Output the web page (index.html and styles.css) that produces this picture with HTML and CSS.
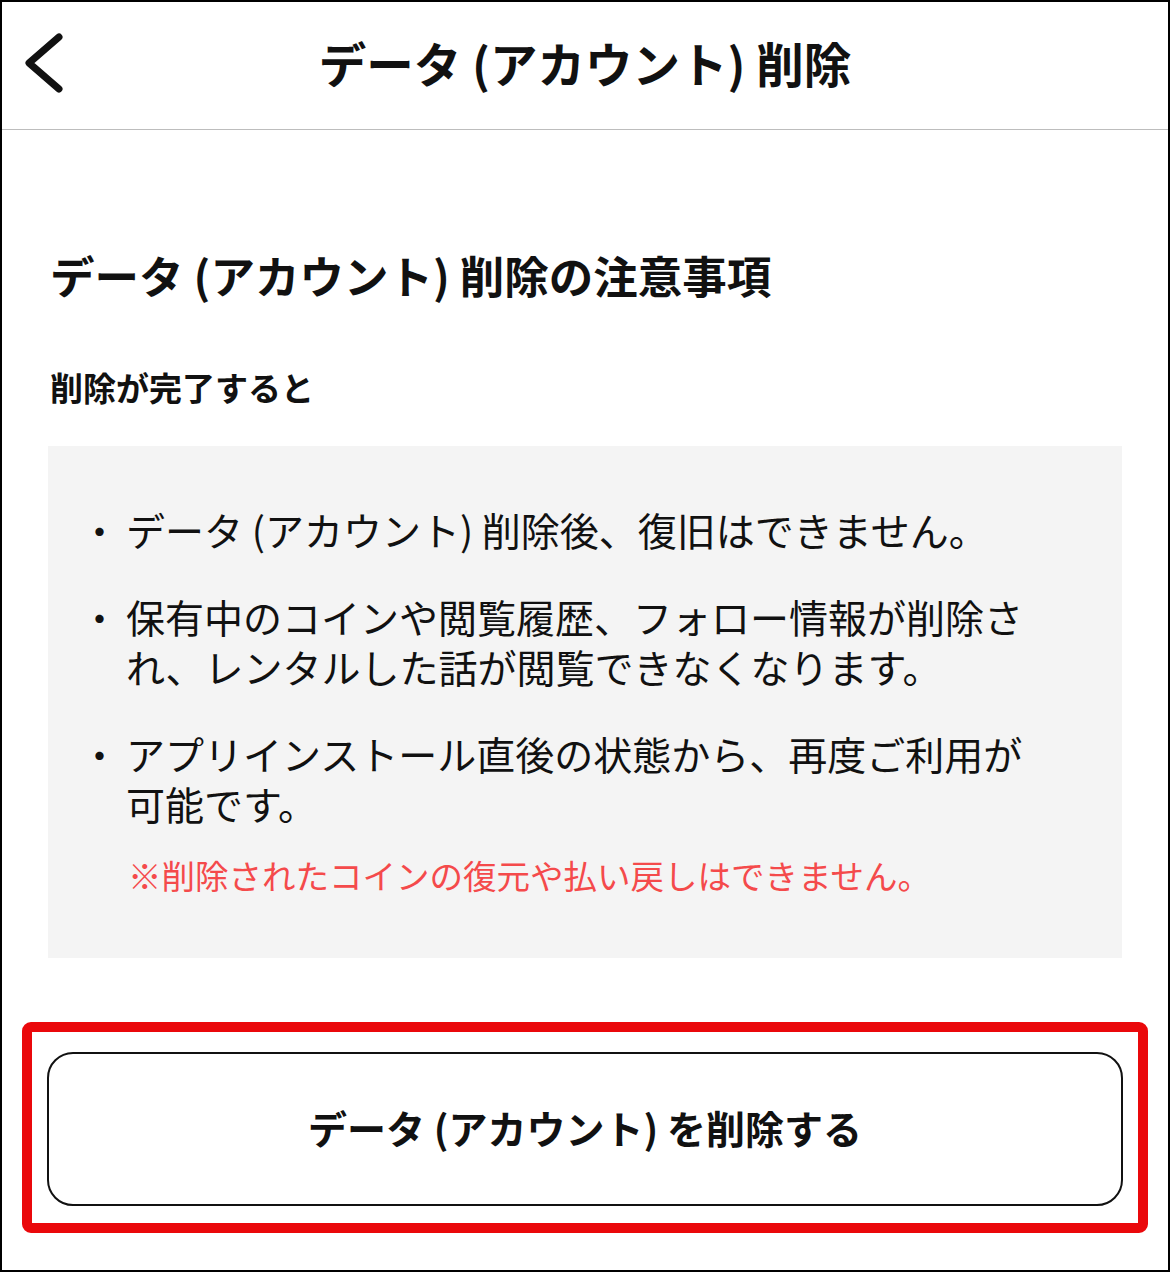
FILE: index.html
```html
<!DOCTYPE html>
<html lang="ja">
<head>
  <meta charset="UTF-8">
  <title>データ (アカウント) 削除</title>
  <link rel="stylesheet" href="styles.css">
</head>
<body>
  <div class="screen">
    <header class="nav">
      <a class="nav-back" href="#" aria-label="戻る">
        <svg width="44" height="64" viewBox="0 0 44 64">
          <polyline points="37,6 7,32 37,58" fill="none" stroke="#111" stroke-width="7" stroke-linecap="round" stroke-linejoin="round"/>
        </svg>
      </a>
      <h1 class="nav-title">データ (アカウント) 削除</h1>
      <span></span>
    </header>

    <main class="content">
      <h2 class="title">データ (アカウント) 削除の注意事項</h2>
      <h3 class="subtitle">削除が完了すると</h3>

      <div class="notice">
        <ul class="notice-list">
          <li>データ (アカウント) 削除後、復旧はできません。</li>
          <li>保有中のコインや閲覧履歴、フォロー情報が削除され、レンタルした話が閲覧できなくなります。</li>
          <li>アプリインストール直後の状態から、再度ご利用が可能です。</li>
        </ul>
        <p class="notice-warn">※削除されたコインの復元や払い戻しはできません。</p>
      </div>

      <div class="highlight">
        <button class="btn-delete">データ (アカウント) を削除する</button>
      </div>
    </main>
  </div>
</body>
</html>
```

FILE: styles.css
```css
:root {
  --texto: #111;
  --gris-caja: #f4f4f4;
  --rojo-nota: #f44a4b;
  --rojo-marco: #ea080b;
}
* {
  box-sizing: border-box;
}
body {
  margin: 0;
  font-family: "Noto Sans CJK JP", "Noto Sans", sans-serif;
  color: var(--texto);
  background: #fff;
}
.screen {
  width: 1170px;
  height: 1272px;
  border: 2px solid #000;
  overflow: hidden;
}

/* cabecera */
.nav {
  display: grid;
  grid-template-columns: 1fr auto 1fr;
  align-items: center;
  height: 128px;
  padding-bottom: 6px;
  border-bottom: 1px solid #bdbdbd;
}
.nav-back {
  display: flex;
  margin-left: 20px;
  width: 44px;
}
.nav-title {
  margin: 0;
  font-size: 47.5px;
  font-weight: 700;
}

.content {
  padding: 0 46px 0 20px;
}
.title {
  margin: 110px 0 0 28px;
  font-size: 44.5px;
  line-height: 70px;
  font-weight: 700;
}
.subtitle {
  margin: 54px 0 0 28px;
  font-size: 33px;
  line-height: 46px;
  font-weight: 700;
}

/* caja gris */
.notice {
  margin: 36px 0 0 26px;
  background: var(--gris-caja);
  padding: 58px 80px 63px 78px;
}
.notice-list {
  list-style: none;
  margin: 0;
  padding: 0;
}
.notice-list li {
  position: relative;
  font-size: 39px;
  line-height: 50px;
  margin-bottom: 37px;
}
.notice-list li:last-child {
  margin-bottom: 0;
}
.notice-list li::before {
  content: "・";
  position: absolute;
  left: -46px;
  top: 0;
}
.notice-warn {
  margin: 27px 0 0 2px;
  color: var(--rojo-nota);
  font-size: 33.5px;
  line-height: 40px;
}

/* botón marcado */
.highlight {
  margin: 64px -26px 0 0;
  border: 10px solid var(--rojo-marco);
  border-radius: 9px;
  padding: 20px 15px 17px 15px;
}
.btn-delete {
  display: block;
  width: 100%;
  height: 154px;
  padding-bottom: 6px;
  background: #fff;
  border: 2px solid var(--texto);
  border-radius: 26px;
  font-family: inherit;
  font-size: 39px;
  font-weight: 700;
  color: var(--texto);
  cursor: pointer;
}
```
